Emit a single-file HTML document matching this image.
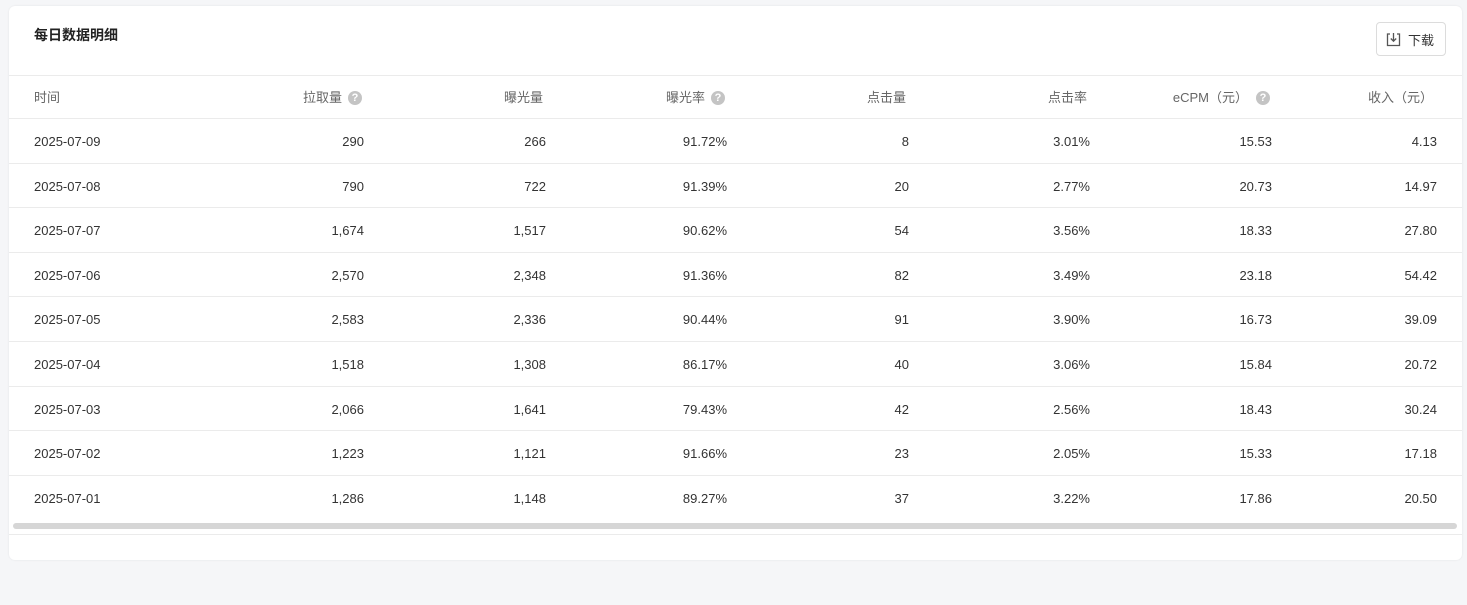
<!DOCTYPE html>
<html><head><meta charset="utf-8"><style>
*{margin:0;padding:0;box-sizing:border-box}
body{width:1467px;height:605px;background:#f5f6f8;font-family:"Liberation Sans","Noto Sans CJK SC",sans-serif;position:relative;overflow:hidden;color:#333}
.card{position:absolute;left:9px;top:6px;width:1453px;height:554px;background:#fff;border-radius:6px;box-shadow:0 0 2px rgba(0,0,0,.08)}
.title{position:absolute;left:34px;top:25px;font-size:14px;font-weight:bold;color:#222}
.btn{position:absolute;left:1376px;top:22px;width:70px;height:34px;border:1px solid #dcdcdc;border-radius:4px;font-size:13px;color:#333}
.btn span{position:absolute;left:31px;top:7px}
.btn svg{position:absolute;left:9px;top:9px}
.line{position:absolute;left:9px;width:1453px;height:1px;background:#ebebeb}
.c{position:absolute;font-size:13px;white-space:nowrap;line-height:16px}
.h{color:#666}
.q{display:inline-block;width:14px;height:14px;border-radius:50%;background:#c4c4c4;color:#fff;font-size:11px;font-weight:bold;text-align:center;line-height:14px;vertical-align:1px;margin-left:6px}
.sb{position:absolute;left:13px;top:523px;width:1444px;height:6px;background:#d6d6d6;border-radius:3px}
</style></head><body>
<div class="card"></div>
<div class="title">每日数据明细</div>
<div class="btn"><svg width="15" height="15" viewBox="0 0 15 15" fill="none" stroke="#555" stroke-width="1.3"><path d="M4 2H1.5v11.5h12V2H11"/><path d="M7.5 1v8M4.8 6.5l2.7 2.7 2.7-2.7"/></svg><span>下载</span></div>
<div class="line" style="top:75px"></div>
<div class="line" style="top:118px"></div>
<div id="rows"></div>
<div class="sb"></div>
<div class="line" style="top:534px"></div>
<script>
var R=[364,546,727,909,1090,1272,1437];
var H=['<span class="c h" style="left:34px;top:90px">时间</span>',
'<span class="c h" style="right:'+(1467-362)+'px;top:90px">拉取量<span class="q">?</span></span>',
'<span class="c h" style="right:'+(1467-543)+'px;top:90px">曝光量</span>',
'<span class="c h" style="right:'+(1467-725)+'px;top:90px">曝光率<span class="q">?</span></span>',
'<span class="c h" style="right:'+(1467-906)+'px;top:90px">点击量</span>',
'<span class="c h" style="right:'+(1467-1087)+'px;top:90px">点击率</span>',
'<span class="c h" style="right:'+(1467-1270)+'px;top:90px">eCPM（元）<span class="q" style="margin-left:8px">?</span></span>',
'<span class="c h" style="right:'+(1467-1433)+'px;top:90px">收入（元）</span>'];
var D=[["2025-07-09","290","266","91.72%","8","3.01%","15.53","4.13"],
["2025-07-08","790","722","91.39%","20","2.77%","20.73","14.97"],
["2025-07-07","1,674","1,517","90.62%","54","3.56%","18.33","27.80"],
["2025-07-06","2,570","2,348","91.36%","82","3.49%","23.18","54.42"],
["2025-07-05","2,583","2,336","90.44%","91","3.90%","16.73","39.09"],
["2025-07-04","1,518","1,308","86.17%","40","3.06%","15.84","20.72"],
["2025-07-03","2,066","1,641","79.43%","42","2.56%","18.43","30.24"],
["2025-07-02","1,223","1,121","91.66%","23","2.05%","15.33","17.18"],
["2025-07-01","1,286","1,148","89.27%","37","3.22%","17.86","20.50"]];
var s=H.join('');
for(var i=0;i<9;i++){var tp=118+i*44.6,ty=Math.round(tp+16);
s+='<span class="c" style="left:34px;top:'+ty+'px">'+D[i][0]+'</span>';
for(var j=1;j<8;j++)s+='<span class="c" style="right:'+(1467-R[j-1])+'px;top:'+ty+'px">'+D[i][j]+'</span>';
if(i<8)s+='<div class="line" style="top:'+Math.round(tp+44.6)+'px"></div>';}
document.getElementById('rows').innerHTML=s;
</script>
</body></html>
